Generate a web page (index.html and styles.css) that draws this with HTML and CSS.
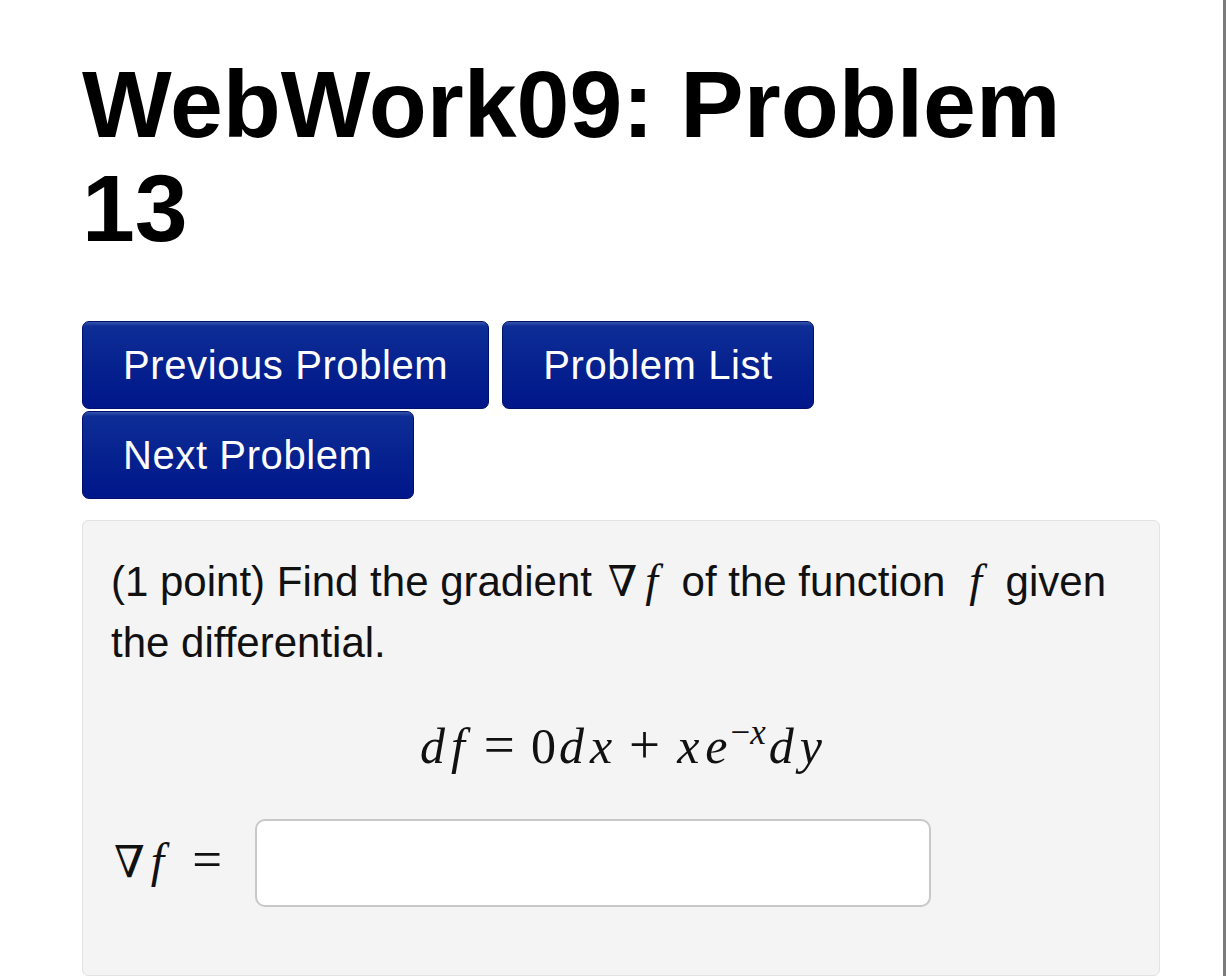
FILE: index.html
```html
<!DOCTYPE html>
<html lang="en">
<head>
  <meta charset="UTF-8">
  <meta name="viewport" content="width=device-width, initial-scale=1.0">
  <title>WebWork09: Problem 13</title>
  <link rel="stylesheet" href="styles.css">
</head>
<body>
  <div class="page">
    <div class="container">
      <h1 class="title">WebWork09: Problem 13</h1>

      <div class="nav">
        <div class="nav-row">
          <button class="btn">Previous Problem</button>
          <button class="btn">Problem List</button>
        </div>
        <div class="nav-row">
          <button class="btn">Next Problem</button>
        </div>
      </div>

      <div class="problem">
        <p class="statement">
          (1 point) Find the gradient
          <span class="math"><span class="nabla">&#8711;</span><span class="mi">f</span></span>
          of the function <span class="math"><span class="mi">f</span></span> given the differential.
        </p>

        <div class="display">
          <span class="mi">d</span><span class="mi">f</span><span class="rel">=</span><span class="mn">0</span><span class="mi">d</span><span class="mi">x</span><span class="bin">+</span><span class="mi">x</span><span class="mi">e</span><sup class="sup"><span class="mo">&minus;</span><span class="mi">x</span></sup><span class="mi">d</span><span class="mi">y</span>
        </div>

        <div class="answer">
          <label class="answer-label" for="ans">
            <span class="nabla">&#8711;</span><span class="mi">f</span><span class="rel">=</span>
          </label>
          <input class="answer-input" type="text" id="ans">
        </div>
      </div>
    </div>
  </div>
</body>
</html>
```

FILE: styles.css
```css
html, body {
  margin: 0;
  padding: 0;
  background: #fff;
}
body {
  font-family: "Liberation Sans", Arial, Helvetica, sans-serif;
  color: #000;
  overflow: hidden;
}
.page {
  width: 1226px;
  height: 976px;
  box-sizing: border-box;
  border-right: 3px solid #7b7b7b;
  overflow: hidden;
}
.container {
  width: 1078px;
  padding-left: 82px;
}
.title {
  margin: 52px 0 0;
  font-size: 95px;
  line-height: 104px;
  font-weight: bold;
  width: 1010px;
}
.nav {
  margin-top: 61px;
  display: flex;
  flex-direction: column;
  gap: 2px;
}
.nav-row {
  display: flex;
  gap: 13px;
}
.btn {
  font-family: "Liberation Sans", Arial, Helvetica, sans-serif;
  font-size: 40px;
  line-height: 46px;
  letter-spacing: 0.6px;
  color: #fff;
  padding: 20px 40px;
  border: 1px solid #00106e;
  border-radius: 7px;
  background: linear-gradient(to bottom, #3454aa 0%, #0e2d96 5%, #06228f 50%, #00168a 100%);
  cursor: pointer;
}
.problem {
  margin-top: 21px;
  background: #f4f4f4;
  border: 1px solid #e3e3e3;
  border-radius: 6px;
  padding: 29px 28px 68px;
}
.statement {
  margin: 0;
  font-size: 42px;
  line-height: 61px;
  color: #111;
}
.math {
  font-family: "Liberation Serif", "Times New Roman", serif;
  font-size: 46px;
  margin: 0 6px 0 4px;
}
.math .mi {
  padding: 0 6px 0 8px;
}
.nabla {
  font-family: "DejaVu Serif", "Liberation Serif", serif;
  font-weight: normal;
  font-size: 0.92em;
}
.mi {
  font-family: "Liberation Serif", "Times New Roman", serif;
  font-style: italic;
  padding: 0 2px;
}
.mo, .mn {
  font-family: "Liberation Serif", "Times New Roman", serif;
  font-style: normal;
}
.rel {
  font-family: "Liberation Serif", "Times New Roman", serif;
  font-size: 1.1em;
  margin: 0 16px;
}
.bin {
  font-family: "Liberation Serif", "Times New Roman", serif;
  font-size: 1.1em;
  margin: 0 14px;
}
.display {
  margin-top: 42px;
  text-align: center;
  font-family: "Liberation Serif", "Times New Roman", serif;
  font-size: 50px;
  line-height: 60px;
  color: #111;
}
.display .mi {
  padding: 0 3px;
}
.sup {
  font-size: 0.7em;
  vertical-align: 0.55em;
  line-height: 0;
}
.sup .mi {
  padding: 0;
}
.answer {
  margin-top: 43px;
  display: flex;
  align-items: center;
}
.answer-label {
  width: 144px;
  flex: 0 0 auto;
  font-family: "Liberation Serif", "Times New Roman", serif;
  font-size: 48px;
  line-height: 60px;
  color: #111;
  padding-left: 3px;
  box-sizing: border-box;
  margin-top: -6px;
}
.answer-label .mi {
  padding: 0 4px 0 6px;
}
.answer-label .rel {
  margin: 0 0 0 24px;
}
.answer-input {
  width: 676px;
  height: 88px;
  box-sizing: border-box;
  border: 2px solid #c8c8c8;
  border-radius: 10px;
  background: #fff;
  font-size: 40px;
  padding: 0 12px;
}
```
